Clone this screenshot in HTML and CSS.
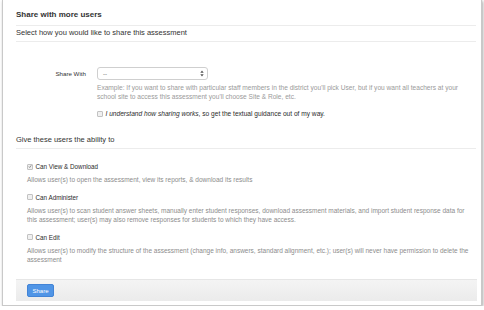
FILE: index.html
```html
<!DOCTYPE html>
<html lang="en">
<head>
    <meta charset="UTF-8">
    <title>Share with more users</title>
    <link rel="stylesheet" href="styles.css">
</head>
<body>
    <div class="window">
        <div class="panel">
            <h3 class="panel-title">Share with more users</h3>
            <h4 class="section-title">Select how you would like to share this assessment</h4>

            <div class="share-form">
                <label class="field-label">Share With</label>
                <div class="field">
                    <div class="select">
                        <span>--</span>
                        <svg width="4" height="7" viewBox="0 0 4 7"><path d="M0.3 2.8 L2 0.6 L3.7 2.8 Z M0.3 4.2 L2 6.4 L3.7 4.2 Z" fill="#555"/></svg>
                    </div>
                    <p class="help">Example: If you want to share with particular staff members in the district you'll pick User, but if you want all teachers at your school site to access this assessment you'll choose Site &amp; Role, etc.</p>
                    <label class="check"><span class="box"></span><span><em>I understand how sharing works</em>, so get the textual guidance out of my way.</span></label>
                </div>
            </div>

            <h4 class="section-title">Give these users the ability to</h4>

            <div class="abilities">
                <div class="ability">
                    <label class="check"><span class="box checked"><svg width="5" height="5" viewBox="0 0 5 5"><path d="M1 2.6 L2.1 3.7 L4.1 1" fill="none" stroke="#555" stroke-width="0.8"/></svg></span>Can View &amp; Download</label>
                    <p class="desc">Allows user(s) to open the assessment, view its reports, &amp; download its results</p>
                </div>
                <div class="ability">
                    <label class="check"><span class="box"></span>Can Administer</label>
                    <p class="desc">Allows user(s) to scan student answer sheets, manually enter student responses, download assessment materials, and import student response data for this assessment; user(s) may also remove responses for students to which they have access.</p>
                </div>
                <div class="ability">
                    <label class="check"><span class="box"></span>Can Edit</label>
                    <p class="desc">Allows user(s) to modify the structure of the assessment (change info, answers, standard alignment, etc.); user(s) will never have permission to delete the assessment</p>
                </div>
            </div>
        </div>

        <div class="footer">
            <button type="button" class="btn">Share</button>
        </div>
    </div>
</body>
</html>
```

FILE: styles.css
```css
body {
    margin: 0;
    background-color: #fff;
    font-family: 'Liberation Sans', Arial, sans-serif;
    color: #333;
}

.window {
    margin-left: 2px;
    width: 478px;
    height: 305px;
    border: 1px solid #c9c9c9;
    border-top: none;
    box-shadow: 1px 1px 3px rgba(0, 0, 0, 0.35);
    background-color: #fff;
    display: flex;
    flex-direction: column;
}

.panel {
    padding: 0 5px 0 13px;
}

.panel-title {
    margin: 0;
    padding: 10px 0 5px;
    font-size: 8px;
    line-height: 10px;
    font-weight: 700;
    color: #333;
    border-bottom: 1px solid #ececec;
}

.section-title {
    margin: 0;
    padding: 2px 0 3px;
    font-size: 7.5px;
    line-height: 10px;
    font-weight: 400;
    color: #333;
    border-bottom: 1px solid #ececec;
}

.share-form {
    display: grid;
    grid-template-columns: 70px 1fr;
    column-gap: 11px;
    padding: 25px 8px 0 0;
    margin-bottom: 15px;
}

.field-label {
    text-align: right;
    font-size: 6.2px;
    line-height: 13px;
    color: #333;
}

.select {
    width: 101px;
    height: 11px;
    border: 1px solid #cfcfcf;
    border-radius: 3px;
    display: flex;
    align-items: center;
    justify-content: space-between;
    padding: 0 3px 0 5px;
    font-size: 6px;
    color: #555;
}

.help {
    margin: 4px 0 0;
    font-size: 6.6px;
    line-height: 8.5px;
    color: #9a9a9a;
}

.check {
    display: flex;
    align-items: center;
    font-size: 6.3px;
    line-height: 9px;
    color: #2b2b2b;
}

.field .check {
    margin-top: 8px;
    font-size: 6.6px;
}

.box {
    width: 4px;
    height: 4px;
    border: 0.5px solid #c2c2c2;
    border-radius: 1px;
    background-color: #f0f0f0;
    margin-right: 2.5px;
    display: flex;
    align-items: center;
    justify-content: center;
    flex-shrink: 0;
}

.abilities {
    padding: 13px 0 0 11px;
}

.ability {
    margin-bottom: 8px;
}

.desc {
    margin: 4px 0 0;
    font-size: 6.5px;
    line-height: 9.5px;
    color: #8c8c8c;
}

.footer {
    margin: auto 4px 4px 13px;
    height: 21px;
    border-top: 1px solid #e6e6e6;
    background: linear-gradient(#f4f4f4, #ebebeb);
    display: flex;
    align-items: center;
    padding-left: 11px;
}

.btn {
    width: 27px;
    height: 13px;
    padding: 0;
    border: 1px solid #4384d6;
    border-radius: 2px;
    background-color: #5095e6;
    color: #fff;
    font-family: inherit;
    font-size: 6px;
    cursor: pointer;
}
```
